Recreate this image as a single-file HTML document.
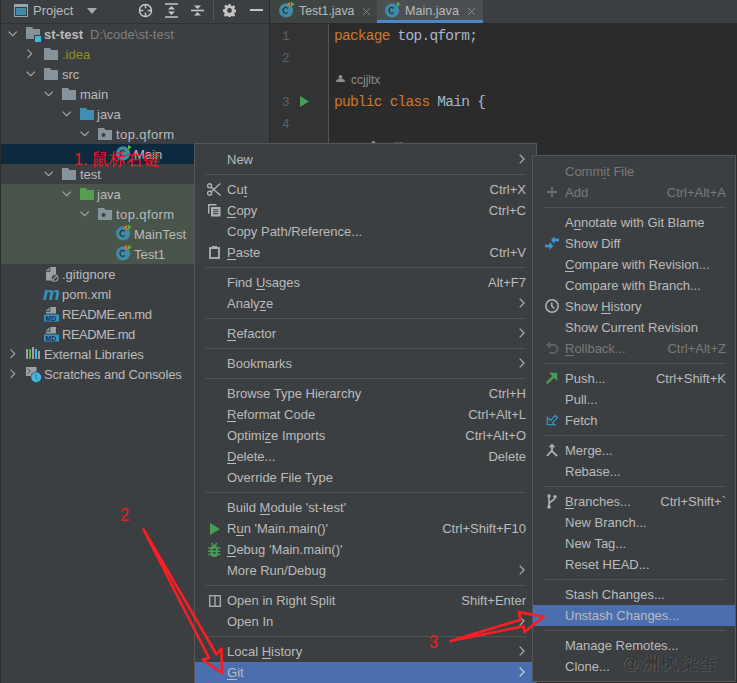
<!DOCTYPE html>
<html><head><meta charset="utf-8"><style>
*{margin:0;padding:0;box-sizing:border-box}
html,body{width:737px;height:683px;overflow:hidden;background:#3c3f41;font-family:"Liberation Sans",sans-serif;font-size:13px;color:#bbbbbb}
body{position:relative}
div,span,svg{position:absolute}
.t{white-space:nowrap;line-height:15px}
.mono{font-family:"Liberation Mono",monospace}
.kw{color:#cc7832}
.menu{background:#3c3f41;border:1px solid #555759}
.sep{height:1px;background:#515355}
.dis{color:#7a7a7a}
.ul{border-bottom:1px solid currentColor;line-height:12px;display:inline-block;position:static}
</style></head><body>
<div style="left:0px;top:0px;width:270px;height:683px;background:#3c3f41;"></div>
<div style="left:0px;top:23px;width:270px;height:1px;background:#2f3133;"></div>
<div style="left:0px;top:0px;width:1px;height:683px;background:#2b2b2b;"></div>
<div style="left:269px;top:0px;width:1px;height:683px;background:#2b2b2b;"></div>
<svg style="left:14px;top:4px" width="14" height="13" viewBox="0 0 14 13"><rect width="14" height="13" fill="#9aa7b0"/><rect x="1" y="3" width="12" height="9" fill="#3a3d3f"/><rect x="2" y="4" width="10" height="7" fill="#3e8bac"/></svg>
<span class="t" style="left:33px;top:3px;">Project</span>
<svg style="left:87px;top:8px" width="10" height="6" viewBox="0 0 10 6"><path d="M0 0h10L5 6z" fill="#a8a8a8"/></svg>
<svg style="left:138px;top:3px" width="15" height="15" viewBox="0 0 15 15"><circle cx="7.5" cy="7.5" r="6" fill="none" stroke="#c4c4c4" stroke-width="1.5"/><path d="M7.5 1v13M1 7.5h13" stroke="#c4c4c4" stroke-width="1.5"/><circle cx="7.5" cy="7.5" r="2.2" fill="#3c3f41"/></svg>
<svg style="left:165px;top:3px" width="13" height="15" viewBox="0 0 13 15"><path d="M0 1h13M0 14h13" stroke="#c4c4c4" stroke-width="1.6"/><path d="M6.5 3l-3.5 3.5h7zM6.5 12l-3.5-3.5h7z" fill="#c4c4c4"/></svg>
<svg style="left:191px;top:3px" width="13" height="15" viewBox="0 0 13 15"><path d="M0 7.5h13" stroke="#c4c4c4" stroke-width="1.6"/><path d="M6.5 6l-3.5-3.5h7zM6.5 9l-3.5 3.5h7z" fill="#c4c4c4"/></svg>
<div style="left:213px;top:1px;width:1px;height:19px;background:#55585a;"></div>
<svg style="left:223px;top:4px" width="13" height="13" viewBox="0 0 16 16"><path fill="#c4c4c4" d="M6.6 0h2.8l.4 2.2 1.4.6 1.9-1.3 2 2-1.3 1.9.6 1.4 2.2.4v2.8l-2.2.4-.6 1.4 1.3 1.9-2 2-1.9-1.3-1.4.6-.4 2.2H6.6l-.4-2.2-1.4-.6-1.9 1.3-2-2 1.3-1.9-.6-1.4L0 9.4V6.6l2.2-.4.6-1.4-1.3-1.9 2-2 1.9 1.3 1.4-.6zM8 5a3 3 0 100 6 3 3 0 000-6z"/></svg>
<div style="left:250px;top:9px;width:13px;height:2px;background:#c4c4c4;"></div>
<div style="left:1px;top:144px;width:268px;height:20px;background:#0d293e;"></div>
<div style="left:1px;top:184px;width:268px;height:80px;background:#49544a;"></div>
<svg style="left:8px;top:31px" width="10" height="6" viewBox="0 0 10 6"><path d="M0.6 0.6L4.7 4.7L8.8 0.6" fill="none" stroke="#a8aaac" stroke-width="1.1"/></svg>
<svg style="left:26px;top:27px" width="16" height="16" viewBox="0 0 16 16"><path d="M0 0h6l1.5 2H14v10H0z" fill="#87939a"/><rect x="8" y="8" width="8" height="8" fill="#3c3f41"/><rect x="9" y="9" width="6" height="6" fill="#40b6e0"/></svg>
<span class="t" style="left:44px;top:27px;"><b>st-test</b></span>
<span class="t" style="left:90px;top:27px;color:#808080;">D:\code\st-test</span>
<svg style="left:27px;top:49px" width="6" height="10" viewBox="0 0 6 10"><path d="M0.6 0.6L4.7 4.7L0.6 8.8" fill="none" stroke="#a8aaac" stroke-width="1.1"/></svg>
<svg style="left:44px;top:48px" width="14" height="12" viewBox="0 0 14 12"><path d="M0 0h6l1.5 2H14v10H0z" fill="#87939a"/></svg>
<span class="t" style="left:62px;top:47px;color:#8f8f1e;">.idea</span>
<svg style="left:26px;top:71px" width="10" height="6" viewBox="0 0 10 6"><path d="M0.6 0.6L4.7 4.7L8.8 0.6" fill="none" stroke="#a8aaac" stroke-width="1.1"/></svg>
<svg style="left:44px;top:68px" width="14" height="12" viewBox="0 0 14 12"><path d="M0 0h6l1.5 2H14v10H0z" fill="#87939a"/></svg>
<span class="t" style="left:62px;top:67px;">src</span>
<svg style="left:44px;top:91px" width="10" height="6" viewBox="0 0 10 6"><path d="M0.6 0.6L4.7 4.7L8.8 0.6" fill="none" stroke="#a8aaac" stroke-width="1.1"/></svg>
<svg style="left:62px;top:88px" width="14" height="12" viewBox="0 0 14 12"><path d="M0 0h6l1.5 2H14v10H0z" fill="#87939a"/></svg>
<span class="t" style="left:80px;top:87px;">main</span>
<svg style="left:62px;top:111px" width="10" height="6" viewBox="0 0 10 6"><path d="M0.6 0.6L4.7 4.7L8.8 0.6" fill="none" stroke="#a8aaac" stroke-width="1.1"/></svg>
<svg style="left:80px;top:108px" width="14" height="12" viewBox="0 0 14 12"><path d="M0 0h6l1.5 2H14v10H0z" fill="#3d8fb5"/></svg>
<span class="t" style="left:97px;top:107px;">java</span>
<svg style="left:80px;top:131px" width="10" height="6" viewBox="0 0 10 6"><path d="M0.6 0.6L4.7 4.7L8.8 0.6" fill="none" stroke="#a8aaac" stroke-width="1.1"/></svg>
<svg style="left:98px;top:128px" width="14" height="12" viewBox="0 0 14 12"><path d="M0 0h6l1.5 2H14v10H0z" fill="#87939a"/><circle cx="5.5" cy="7" r="2" fill="#3c3f41"/></svg>
<span class="t" style="left:116px;top:127px;letter-spacing:0.4px">top.qform</span>
<svg style="left:116px;top:145px" width="16" height="16" viewBox="0 0 16 16"><circle cx="7.1" cy="8.4" r="7.1" fill="#3f8aa5"/><path d="M8.6 6.6A2.5 3 0 1 0 8.6 10.2" fill="none" stroke="#263238" stroke-width="1.15"/><path d="M12 -0.5l3.7 2.7-3.7 2.7z" fill="#5bb03a"/></svg>
<span class="t" style="left:134px;top:147px;">Main</span>
<svg style="left:44px;top:171px" width="10" height="6" viewBox="0 0 10 6"><path d="M0.6 0.6L4.7 4.7L8.8 0.6" fill="none" stroke="#a8aaac" stroke-width="1.1"/></svg>
<svg style="left:62px;top:168px" width="14" height="12" viewBox="0 0 14 12"><path d="M0 0h6l1.5 2H14v10H0z" fill="#87939a"/></svg>
<span class="t" style="left:80px;top:167px;">test</span>
<svg style="left:62px;top:191px" width="10" height="6" viewBox="0 0 10 6"><path d="M0.6 0.6L4.7 4.7L8.8 0.6" fill="none" stroke="#a8aaac" stroke-width="1.1"/></svg>
<svg style="left:80px;top:188px" width="14" height="12" viewBox="0 0 14 12"><path d="M0 0h6l1.5 2H14v10H0z" fill="#559d4f"/></svg>
<span class="t" style="left:97px;top:187px;">java</span>
<svg style="left:80px;top:211px" width="10" height="6" viewBox="0 0 10 6"><path d="M0.6 0.6L4.7 4.7L8.8 0.6" fill="none" stroke="#a8aaac" stroke-width="1.1"/></svg>
<svg style="left:98px;top:208px" width="14" height="12" viewBox="0 0 14 12"><path d="M0 0h6l1.5 2H14v10H0z" fill="#87939a"/><circle cx="5.5" cy="7" r="2" fill="#3c3f41"/></svg>
<span class="t" style="left:116px;top:207px;letter-spacing:0.4px">top.qform</span>
<svg style="left:116px;top:225px" width="16" height="16" viewBox="0 0 16 16"><circle cx="7.1" cy="8.4" r="7.1" fill="#3f8aa5"/><path d="M8.6 6.6A2.5 3 0 1 0 8.6 10.2" fill="none" stroke="#263238" stroke-width="1.15"/><path d="M11.2 -0.5v5.4L7.6 2.2z" fill="#ec6a2a"/><path d="M12 -0.5l3.7 2.7-3.7 2.7z" fill="#5bb03a"/></svg>
<span class="t" style="left:134px;top:227px;">MainTest</span>
<svg style="left:116px;top:245px" width="16" height="16" viewBox="0 0 16 16"><circle cx="7.1" cy="8.4" r="7.1" fill="#3f8aa5"/><path d="M8.6 6.6A2.5 3 0 1 0 8.6 10.2" fill="none" stroke="#263238" stroke-width="1.15"/><path d="M11.2 -0.5v5.4L7.6 2.2z" fill="#ec6a2a"/><path d="M12 -0.5l3.7 2.7-3.7 2.7z" fill="#5bb03a"/></svg>
<span class="t" style="left:134px;top:247px;">Test1</span>
<svg style="left:44px;top:267px" width="15" height="15" viewBox="0 0 15 15"><path d="M2 3.8L5.3 0.5V3.8z" fill="#9aa2a8"/><path d="M6.3 0H12V7.2A4.3 4.3 0 0 0 7.2 13.5H2V4.8H6.3z" fill="#9aa2a8"/><circle cx="10.6" cy="11" r="3.3" fill="none" stroke="#9aa2a8" stroke-width="1.1"/><path d="M8.4 13.2L12.8 8.8" stroke="#9aa2a8" stroke-width="1.1"/></svg>
<span class="t" style="left:62px;top:267px;">.gitignore</span>
<span class="t" style="left:43px;top:284px;color:#3592c4;font-size:19px;line-height:20px;letter-spacing:-1px"><i><b>m</b></i></span>
<span class="t" style="left:62px;top:287px;">pom.xml</span>
<svg style="left:44px;top:307px" width="16" height="16" viewBox="0 0 16 16"><path d="M2 3.8L5.3 0.5V3.8z" fill="#9aa2a8"/><path d="M6.3 0H12V6.5H2V4.8H6.3z" fill="#9aa2a8"/><rect x="0" y="7.5" width="15" height="7" fill="#3592c4"/><text x="1.6" y="13.6" font-size="6.8" font-family="Liberation Sans" font-weight="bold" fill="#22303a">MD</text></svg>
<span class="t" style="left:62px;top:307px;letter-spacing:-0.5px">README.en.md</span>
<svg style="left:44px;top:327px" width="16" height="16" viewBox="0 0 16 16"><path d="M2 3.8L5.3 0.5V3.8z" fill="#9aa2a8"/><path d="M6.3 0H12V6.5H2V4.8H6.3z" fill="#9aa2a8"/><rect x="0" y="7.5" width="15" height="7" fill="#3592c4"/><text x="1.6" y="13.6" font-size="6.8" font-family="Liberation Sans" font-weight="bold" fill="#22303a">MD</text></svg>
<span class="t" style="left:62px;top:327px;letter-spacing:-0.5px">README.md</span>
<svg style="left:10px;top:349px" width="6" height="10" viewBox="0 0 6 10"><path d="M0.6 0.6L4.7 4.7L0.6 8.8" fill="none" stroke="#a8aaac" stroke-width="1.1"/></svg>
<svg style="left:26px;top:345px" width="15" height="15" viewBox="0 0 15 15"><path d="M1 4v10M4 4v10M7 2v12M10 4v10M13 6v8" stroke="#9aa2a8" stroke-width="2"/><path d="M4 4v10" stroke="#5bb33a" stroke-width="2"/><path d="M10 4v10" stroke="#3fb5e8" stroke-width="2"/></svg>
<span class="t" style="left:44px;top:347px;letter-spacing:-0.08px">External Libraries</span>
<svg style="left:10px;top:369px" width="6" height="10" viewBox="0 0 6 10"><path d="M0.6 0.6L4.7 4.7L0.6 8.8" fill="none" stroke="#a8aaac" stroke-width="1.1"/></svg>
<svg style="left:26px;top:367px" width="16" height="16" viewBox="0 0 16 16"><path d="M0 0h10.5v9H0z" fill="#9aa2a8"/><path d="M1.5 1.8l3 2.5-3 2.5" stroke="#3c3f41" fill="none" stroke-width="0.9"/><circle cx="10.2" cy="10.2" r="5.6" fill="#3c3f41"/><circle cx="10.2" cy="10.2" r="5" fill="#40b6e0"/><path d="M10 7v3.8l1.8 1.8" stroke="#3c6a80" fill="none" stroke-width="1"/></svg>
<span class="t" style="left:44px;top:367px;letter-spacing:-0.15px">Scratches and Consoles</span>
<div style="left:270px;top:0px;width:467px;height:683px;background:#2b2b2b;"></div>
<div style="left:270px;top:0px;width:467px;height:23px;background:#3c3f41;"></div>
<div style="left:270px;top:23px;width:467px;height:1px;background:#2b2b2b;"></div>
<div style="left:270px;top:0px;width:107px;height:23px;background:#3e4442;"></div>
<div style="left:377px;top:0px;width:106px;height:23px;background:#4b4f51;"></div>
<div style="left:377px;top:20px;width:106px;height:3px;background:#4a88c7;"></div>
<svg style="left:279px;top:1.5px" width="16" height="16" viewBox="0 0 16 16"><circle cx="7.1" cy="8.4" r="7.1" fill="#3f8aa5"/><path d="M8.6 6.6A2.5 3 0 1 0 8.6 10.2" fill="none" stroke="#263238" stroke-width="1.15"/><path d="M11.2 -0.5v5.4L7.6 2.2z" fill="#ec6a2a"/><path d="M12 -0.5l3.7 2.7-3.7 2.7z" fill="#5bb03a"/></svg>
<span class="t" style="left:299px;top:4px;font-size:12.3px;">Test1.java</span>
<svg style="left:362px;top:7px" width="9" height="9" viewBox="0 0 9 9"><path d="M1 1l7 7M8 1L1 8" stroke="#7d7f81" stroke-width="1"/></svg>
<svg style="left:385px;top:1.5px" width="16" height="16" viewBox="0 0 16 16"><circle cx="7.1" cy="8.4" r="7.1" fill="#3f8aa5"/><path d="M8.6 6.6A2.5 3 0 1 0 8.6 10.2" fill="none" stroke="#263238" stroke-width="1.15"/><path d="M12 -0.5l3.7 2.7-3.7 2.7z" fill="#5bb03a"/></svg>
<span class="t" style="left:405px;top:4px;font-size:12.6px;">Main.java</span>
<svg style="left:467px;top:7px" width="9" height="9" viewBox="0 0 9 9"><path d="M1 1l7 7M8 1L1 8" stroke="#8a8c8e" stroke-width="1"/></svg>
<div style="left:270px;top:24px;width:59px;height:660px;background:#313335;"></div>
<div style="left:328px;top:24px;width:1px;height:660px;background:#555555;"></div>
<span class="t" style="left:282px;top:30px;color:#606366;font-size:12.5px;font-family:'Liberation Mono',monospace">1</span>
<span class="t" style="left:282px;top:52px;color:#606366;font-size:12.5px;font-family:'Liberation Mono',monospace">2</span>
<span class="t" style="left:282px;top:96px;color:#606366;font-size:12.5px;font-family:'Liberation Mono',monospace">3</span>
<span class="t" style="left:282px;top:118px;color:#606366;font-size:12.5px;font-family:'Liberation Mono',monospace">4</span>
<span class="t" style="left:334px;top:29px;font-family:'Liberation Mono',monospace;font-size:14.5px;letter-spacing:-0.75px;color:#a9b7c6"><span class="kw" style="position:static">package</span> top.qform;</span>
<svg style="left:336px;top:75px" width="9" height="7" viewBox="0 0 9 7"><circle cx="4.5" cy="2" r="2" fill="#8c8c8c"/><path d="M0 7a4.5 3.2 0 0 1 9 0z" fill="#8c8c8c"/></svg>
<span class="t" style="left:351px;top:73px;color:#8c8c8c;font-size:12px;">ccjjltx</span>
<svg style="left:300px;top:96px" width="9" height="11" viewBox="0 0 9 11"><path d="M0 0l9 5.5-9 5.5z" fill="#499c54"/></svg>
<svg style="left:369px;top:141px" width="9" height="9" viewBox="0 0 9 9"><circle cx="4.5" cy="2" r="2" fill="#8c8c8c"/></svg>
<span class="t" style="left:382px;top:140px;color:#8c8c8c;font-size:12px;">ccjjltx</span>
<span class="t" style="left:334px;top:95px;font-family:'Liberation Mono',monospace;font-size:14.5px;letter-spacing:-0.75px;color:#a9b7c6"><span class="kw" style="position:static">public class</span> Main {</span>
<div class="menu" style="left:194px;top:143px;width:343px;height:600px"></div>
<span class="t" style="left:227px;top:152px;color:#bbbbbb;">New</span>
<svg style="left:519px;top:154px" width="6" height="10" viewBox="0 0 6 10"><path d="M0.7 0.7L5 5L0.7 9.3" fill="none" stroke="#afb1b3" stroke-width="1.2"/></svg>
<div style="left:205px;top:174px;width:321px;height:1px;background:#515355;"></div>
<span class="t" style="left:227px;top:182px;color:#bbbbbb;">Cu<span class="ul">t</span></span>
<span class="t" style="right:211px;top:182px;color:#bbbbbb">Ctrl+X</span>
<svg style="left:207px;top:183px" width="14" height="13" viewBox="0 0 14 13"><circle cx="2.6" cy="2.8" r="2" fill="none" stroke="#afb1b3" stroke-width="1.4"/><circle cx="2.6" cy="10.2" r="2" fill="none" stroke="#afb1b3" stroke-width="1.4"/><path d="M4.2 4.2L13.6 12.6M4.2 8.8L13.2 0.6" stroke="#afb1b3" stroke-width="1.4"/></svg>
<span class="t" style="left:227px;top:203px;color:#bbbbbb;"><span class="ul">C</span>opy</span>
<span class="t" style="right:211px;top:203px;color:#bbbbbb">Ctrl+C</span>
<svg style="left:208px;top:204px" width="13" height="13" viewBox="0 0 13 13"><path d="M0.8 9.5V0.8H8.5" fill="none" stroke="#afb1b3" stroke-width="1.5"/><rect x="3" y="3" width="9.5" height="9.5" fill="#afb1b3"/><path d="M5 5.8h5.5M5 7.8h5.5M5 9.8h5.5" stroke="#3c3f41" stroke-width="1"/></svg>
<span class="t" style="left:227px;top:224px;color:#bbbbbb;">Copy Path/Reference...</span>
<span class="t" style="left:227px;top:245px;color:#bbbbbb;"><span class="ul">P</span>aste</span>
<span class="t" style="right:211px;top:245px;color:#bbbbbb">Ctrl+V</span>
<svg style="left:209px;top:246px" width="11" height="13" viewBox="0 0 11 13"><rect x="1" y="2" width="9" height="10" fill="none" stroke="#afb1b3" stroke-width="1.8"/><rect x="3" y="0" width="5" height="3" fill="#afb1b3"/></svg>
<div style="left:205px;top:267px;width:321px;height:1px;background:#515355;"></div>
<span class="t" style="left:227px;top:275px;color:#bbbbbb;">Find <span class="ul">U</span>sages</span>
<span class="t" style="right:211px;top:275px;color:#bbbbbb">Alt+F7</span>
<span class="t" style="left:227px;top:296px;color:#bbbbbb;">Analy<span class="ul">z</span>e</span>
<svg style="left:519px;top:298px" width="6" height="10" viewBox="0 0 6 10"><path d="M0.7 0.7L5 5L0.7 9.3" fill="none" stroke="#afb1b3" stroke-width="1.2"/></svg>
<div style="left:205px;top:318px;width:321px;height:1px;background:#515355;"></div>
<span class="t" style="left:227px;top:326px;color:#bbbbbb;"><span class="ul">R</span>efactor</span>
<svg style="left:519px;top:328px" width="6" height="10" viewBox="0 0 6 10"><path d="M0.7 0.7L5 5L0.7 9.3" fill="none" stroke="#afb1b3" stroke-width="1.2"/></svg>
<div style="left:205px;top:348px;width:321px;height:1px;background:#515355;"></div>
<span class="t" style="left:227px;top:356px;color:#bbbbbb;">Bookmarks</span>
<svg style="left:519px;top:358px" width="6" height="10" viewBox="0 0 6 10"><path d="M0.7 0.7L5 5L0.7 9.3" fill="none" stroke="#afb1b3" stroke-width="1.2"/></svg>
<div style="left:205px;top:378px;width:321px;height:1px;background:#515355;"></div>
<span class="t" style="left:227px;top:386px;color:#bbbbbb;">Browse Type Hierarchy</span>
<span class="t" style="right:211px;top:386px;color:#bbbbbb">Ctrl+H</span>
<span class="t" style="left:227px;top:407px;color:#bbbbbb;"><span class="ul">R</span>eformat Code</span>
<span class="t" style="right:211px;top:407px;color:#bbbbbb">Ctrl+Alt+L</span>
<span class="t" style="left:227px;top:428px;color:#bbbbbb;">Optimi<span class="ul">z</span>e Imports</span>
<span class="t" style="right:211px;top:428px;color:#bbbbbb">Ctrl+Alt+O</span>
<span class="t" style="left:227px;top:449px;color:#bbbbbb;"><span class="ul">D</span>elete...</span>
<span class="t" style="right:211px;top:449px;color:#bbbbbb">Delete</span>
<span class="t" style="left:227px;top:470px;color:#bbbbbb;">Override File Type</span>
<div style="left:205px;top:492px;width:321px;height:1px;background:#515355;"></div>
<span class="t" style="left:227px;top:500px;color:#bbbbbb;">Build <span class="ul">M</span>odule 'st-test'</span>
<span class="t" style="left:227px;top:521px;color:#bbbbbb;">R<span class="ul">u</span>n 'Main.main()'</span>
<span class="t" style="right:211px;top:521px;color:#bbbbbb">Ctrl+Shift+F10</span>
<svg style="left:210px;top:523px" width="10" height="12" viewBox="0 0 10 12"><path d="M0 0l10 6-10 6z" fill="#499c54"/></svg>
<span class="t" style="left:227px;top:542px;color:#bbbbbb;"><span class="ul">D</span>ebug 'Main.main()'</span>
<svg style="left:208px;top:541.5px" width="13" height="15" viewBox="0 0 13 15"><path d="M3.4 1l2.3 3M8.9 1L6.6 4" stroke="#499c54" stroke-width="1.6"/><path d="M0 6h12.3M0 9.3h12.3M0 12.5h12.3" stroke="#499c54" stroke-width="1.5"/><rect x="2.6" y="3.6" width="7.2" height="11.4" rx="3.3" fill="#499c54"/><path d="M4.6 7.5h3.4M4.6 10.8h3.4" stroke="#3c3f41" stroke-width="1.3"/></svg>
<span class="t" style="left:227px;top:563px;color:#bbbbbb;">More Run/Debug</span>
<svg style="left:519px;top:565px" width="6" height="10" viewBox="0 0 6 10"><path d="M0.7 0.7L5 5L0.7 9.3" fill="none" stroke="#afb1b3" stroke-width="1.2"/></svg>
<div style="left:205px;top:585px;width:321px;height:1px;background:#515355;"></div>
<span class="t" style="left:227px;top:593px;color:#bbbbbb;">Open in Right Split</span>
<span class="t" style="right:211px;top:593px;color:#bbbbbb">Shift+Enter</span>
<svg style="left:209px;top:595px" width="12" height="12" viewBox="0 0 12 12"><rect x="0.7" y="0.7" width="10.6" height="10.6" fill="none" stroke="#afb1b3" stroke-width="1.3"/><path d="M6 0.7v10.6" stroke="#afb1b3" stroke-width="1.3"/></svg>
<span class="t" style="left:227px;top:614px;color:#bbbbbb;">Open In</span>
<svg style="left:519px;top:616px" width="6" height="10" viewBox="0 0 6 10"><path d="M0.7 0.7L5 5L0.7 9.3" fill="none" stroke="#afb1b3" stroke-width="1.2"/></svg>
<div style="left:205px;top:636px;width:321px;height:1px;background:#515355;"></div>
<span class="t" style="left:227px;top:644px;color:#bbbbbb;">Local <span class="ul">H</span>istory</span>
<svg style="left:519px;top:646px" width="6" height="10" viewBox="0 0 6 10"><path d="M0.7 0.7L5 5L0.7 9.3" fill="none" stroke="#afb1b3" stroke-width="1.2"/></svg>
<div style="left:195px;top:662px;width:341px;height:21px;background:#4b6eaf;"></div>
<span class="t" style="left:227px;top:665px;color:#bbbbbb;"><span class="ul">G</span>it</span>
<svg style="left:519px;top:667px" width="6" height="10" viewBox="0 0 6 10"><path d="M0.7 0.7L5 5L0.7 9.3" fill="none" stroke="#d8d8d8" stroke-width="1.2"/></svg>
<div class="menu" style="left:532px;top:155px;width:204px;height:527px"></div>
<span class="t" style="left:565px;top:164px;color:#7a7a7a;">Comm<span class="ul">i</span>t File</span>
<span class="t" style="left:565px;top:185px;color:#7a7a7a;">Add</span>
<span class="t" style="right:11px;top:185px;color:#7a7a7a">Ctrl+Alt+A</span>
<svg style="left:545px;top:185px" width="15" height="15" viewBox="0 0 15 15"><path d="M7 2v10M2 7h10" stroke="#696b6d" stroke-width="1.9"/></svg>
<div style="left:543px;top:207px;width:183px;height:1px;background:#515355;"></div>
<span class="t" style="left:565px;top:215px;color:#bbbbbb;">A<span class="ul">n</span>notate with Git Blame</span>
<span class="t" style="left:565px;top:236px;color:#bbbbbb;">Show Diff</span>
<svg style="left:545px;top:236px" width="16" height="15" viewBox="0 0 16 15"><path d="M6 4.1L9.6 0.2L9.4 7.9z" fill="#3d9ad6"/><path d="M9 4h5" stroke="#3d9ad6" stroke-width="2.6"/><path d="M8.4 10L4.6 6L4.6 14z" fill="#3d9ad6"/><path d="M0 10h5.2" stroke="#3d9ad6" stroke-width="2.6"/></svg>
<span class="t" style="left:565px;top:257px;color:#bbbbbb;"><span class="ul">C</span>ompare with Revision...</span>
<span class="t" style="left:565px;top:278px;color:#bbbbbb;">Compare with Branch...</span>
<span class="t" style="left:565px;top:299px;color:#bbbbbb;">Show <span class="ul">H</span>istory</span>
<svg style="left:545px;top:299px" width="15" height="15" viewBox="0 0 15 15"><circle cx="7" cy="7" r="6.2" fill="none" stroke="#afb1b3" stroke-width="1.5"/><path d="M6.8 3.4v3.8l2.6 2.2" fill="none" stroke="#afb1b3" stroke-width="1.5"/></svg>
<span class="t" style="left:565px;top:320px;color:#bbbbbb;">Show Current Revision</span>
<span class="t" style="left:565px;top:341px;color:#7a7a7a;"><span class="ul">R</span>ollback...</span>
<span class="t" style="right:11px;top:341px;color:#7a7a7a">Ctrl+Alt+Z</span>
<svg style="left:545px;top:340px" width="15" height="15" viewBox="0 0 15 15"><path d="M4 5h4.5a4 4 0 0 1 0 8H4.5" fill="none" stroke="#5f6264" stroke-width="1.8"/><path d="M1 5l4-3.6v7.2z" fill="#5f6264"/></svg>
<div style="left:543px;top:363px;width:183px;height:1px;background:#515355;"></div>
<span class="t" style="left:565px;top:371px;color:#bbbbbb;">Push...</span>
<span class="t" style="right:11px;top:371px;color:#bbbbbb">Ctrl+Shift+K</span>
<svg style="left:545px;top:371px" width="15" height="15" viewBox="0 0 15 15"><path d="M1.7 12.4L9.5 4.6" stroke="#499c54" stroke-width="2.4"/><path d="M4 1.8h8.2v8.2z" fill="#499c54"/></svg>
<span class="t" style="left:565px;top:392px;color:#bbbbbb;">Pull...</span>
<span class="t" style="left:565px;top:413px;color:#bbbbbb;">Fetch</span>
<svg style="left:545px;top:413px" width="15" height="15" viewBox="0 0 15 15"><path d="M2.3 4.3V11.7H9.7L7.6 9.6L12.6 4.6L10.4 2.4L5.4 7.4Z" fill="none" stroke="#3592c4" stroke-width="1.3" stroke-linejoin="miter"/></svg>
<div style="left:543px;top:435px;width:183px;height:1px;background:#515355;"></div>
<span class="t" style="left:565px;top:443px;color:#bbbbbb;">Merge...</span>
<svg style="left:545px;top:443px" width="15" height="15" viewBox="0 0 15 15"><path d="M3.6 4.3L7 0.5L10.4 4.3z" fill="#afb1b3"/><path d="M7 3v4.5M7.3 7.2L2 13M7 8.2L12.2 13" fill="none" stroke="#afb1b3" stroke-width="1.8"/></svg>
<span class="t" style="left:565px;top:464px;color:#bbbbbb;">Rebase...</span>
<div style="left:543px;top:486px;width:183px;height:1px;background:#515355;"></div>
<span class="t" style="left:565px;top:494px;color:#bbbbbb;"><span class="ul">B</span>ranches...</span>
<span class="t" style="right:11px;top:494px;color:#bbbbbb">Ctrl+Shift+`</span>
<svg style="left:545px;top:494px" width="15" height="15" viewBox="0 0 15 15"><path d="M4 1.5v11.5" stroke="#afb1b3" stroke-width="1.6"/><circle cx="4" cy="2" r="1.7" fill="#afb1b3"/><circle cx="4" cy="13" r="1.8" fill="#afb1b3"/><circle cx="10" cy="2.6" r="1.7" fill="#afb1b3"/><path d="M10 3c0 4.5-6 3.5-6 7.5" fill="none" stroke="#afb1b3" stroke-width="1.6"/></svg>
<span class="t" style="left:565px;top:515px;color:#bbbbbb;">New Branch...</span>
<span class="t" style="left:565px;top:536px;color:#bbbbbb;">New Tag...</span>
<span class="t" style="left:565px;top:557px;color:#bbbbbb;">Reset HEAD...</span>
<div style="left:543px;top:579px;width:183px;height:1px;background:#515355;"></div>
<span class="t" style="left:565px;top:587px;color:#bbbbbb;">Stash Changes...</span>
<div style="left:533px;top:605px;width:202px;height:21px;background:#4b6eaf;"></div>
<span class="t" style="left:565px;top:608px;color:#bbbbbb;">Unstash Changes...</span>
<div style="left:543px;top:630px;width:183px;height:1px;background:#515355;"></div>
<span class="t" style="left:565px;top:638px;color:#bbbbbb;">Manage Remotes...</span>
<span class="t" style="left:565px;top:659px;color:#bbbbbb;">Clone...</span>
<span class="t" style="left:74px;top:150px;color:#ee1c24;font-size:16.5px;line-height:18px">1. 鼠标右键</span>
<span class="t" style="left:120px;top:506px;color:#ee1c24;font-size:19px;line-height:18px;transform:scaleX(0.86);transform-origin:0 0">2</span>
<span class="t" style="left:429px;top:633px;color:#ee1c24;font-size:18.5px;line-height:18px;transform:scaleX(0.88);transform-origin:0 0">3</span>
<svg style="left:0;top:0" width="737" height="683" viewBox="0 0 737 683"><path d="M143.5 529.4 L209 658 L202.5 659.5 L222 673 L221.5 648.5 L216.5 654.5 Z" fill="none" stroke="#fa1e24" stroke-width="2.6" stroke-linejoin="round"/><path d="M450.4 641 L520.7 619.7 L518.8 612.1 L543.5 616.8 L524.5 632 L523.5 626.3 Z" fill="none" stroke="#fa1e24" stroke-width="2.6" stroke-linejoin="round"/></svg>
<span class="t" style="left:621px;top:653px;color:#303234;font-size:18px;letter-spacing:1.5px;line-height:20px;text-shadow:1px 1px 0 #55585a,-1px 0 0 #4a4d4f">@洲枫染蛋</span>
</body></html>
